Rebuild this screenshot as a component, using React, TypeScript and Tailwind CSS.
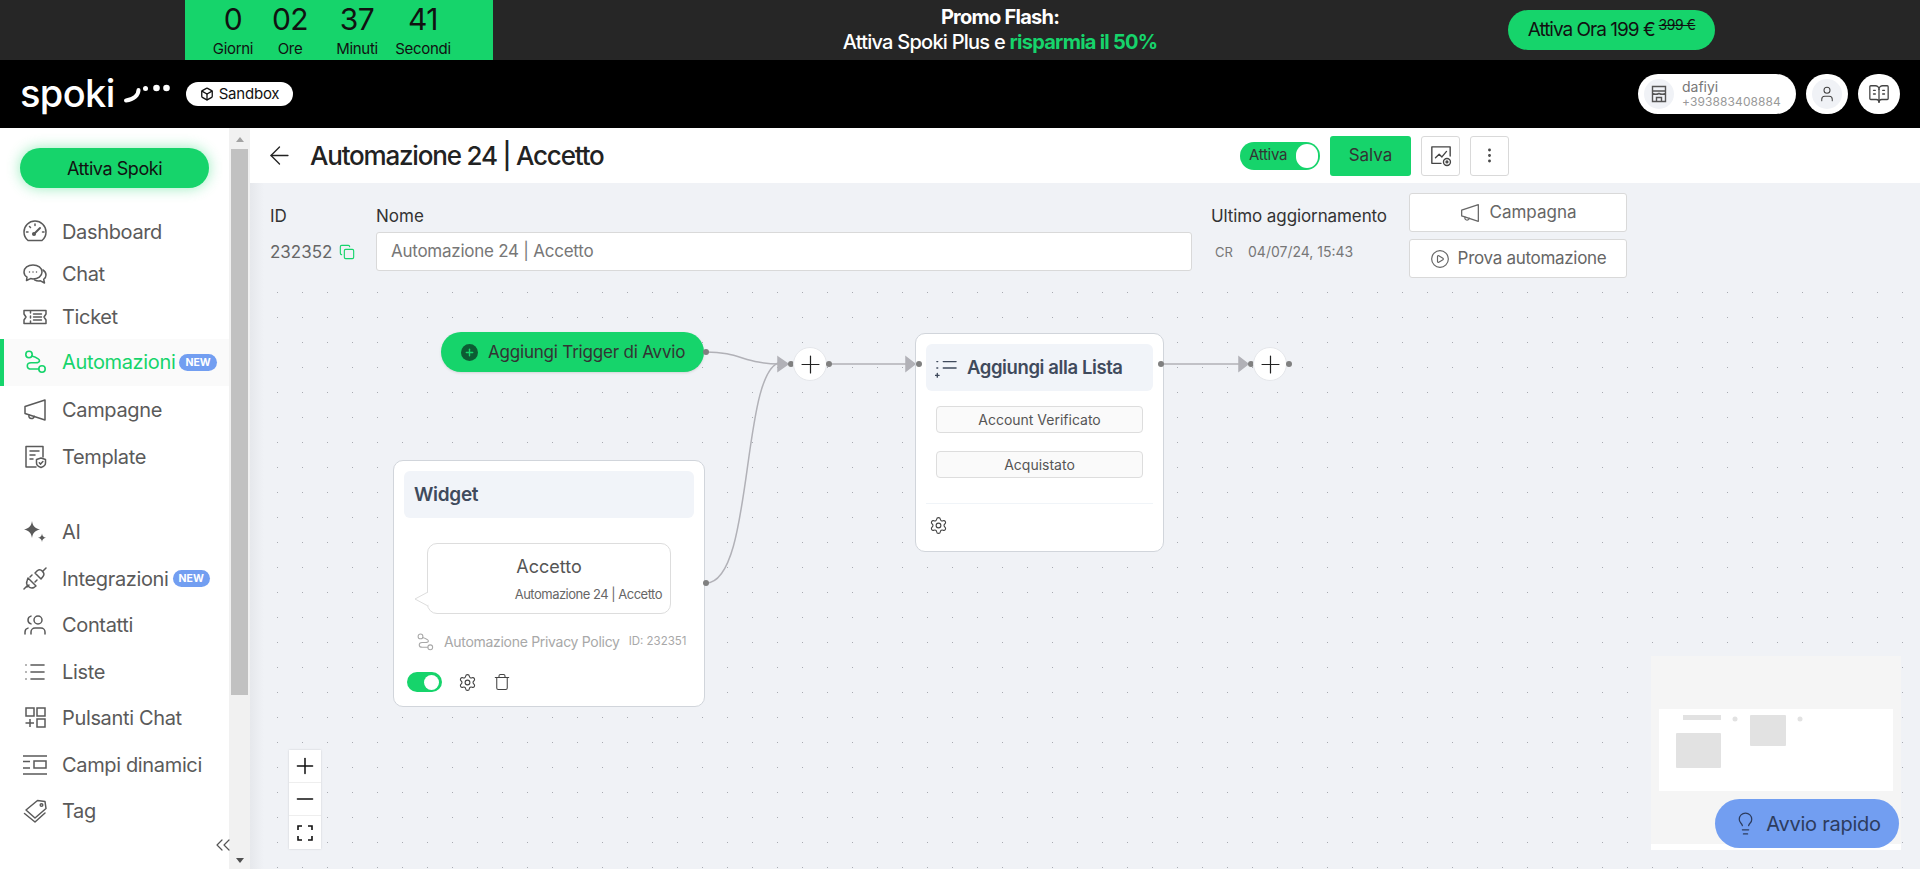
import React from "react";
import { ArrowLeft, Copy, CirclePlay, Settings, Trash, Plus, Minus, Lightbulb, User, BookOpenText, EllipsisVertical, List, Users, Box, ChevronsLeft } from "lucide-react";

const S = { fill: "none", stroke: "currentColor", strokeWidth: 1.5, strokeLinecap: "round", strokeLinejoin: "round" } as const;

const Flow = ({ size = 24, w = 1.6 }: { size?: number; w?: number }) => (
  <svg width={size} height={size} viewBox="0 0 24 24" {...S} strokeWidth={w}>
    <circle cx="6" cy="4.500" r="3.200" />
    <circle cx="19" cy="19" r="3.200" />
    <path d="M8.800 6c4 1.300 7.700 2.500 7.700 4.700 0 1.800-2 2-4 2H8c-2.500 0-3.700 1.500-3.700 3.200C4.300 18 6 19 8.500 19h7.300" />
  </svg>
);
const Dial = () => (
  <svg width="24" height="24" viewBox="0 0 24 24" {...S}>
    <path d="M5 20.500h14c2.500-2 4-5 4-8.500C23 6 18 1 12 1S1 6 1 12c0 3.500 1.500 6.500 4 8.500Z" />
    <path d="M11 14l6-6" strokeWidth={2} />
    <circle cx="11" cy="14" r="1.300" fill="currentColor" />
    <path d="M12 4v1.500M5 12H3.500M21 12h-1.500M6.500 6.500l1 1" />
  </svg>
);
const Horn = ({ size = 24 }: { size?: number }) => (
  <svg width={size} height={size} viewBox="0 0 24 24" {...S}>
    <path d="M22 2v20L2 15.500V8.500L22 2Z" />
    <path d="M6 17c-.5 2 .5 3.500 2.500 3.500 1.500 0 2.500-1 2.700-2.200" />
  </svg>
);
const Chat = () => (
  <svg width="24" height="24" viewBox="0 0 24 24" {...S}>
    <path d="M10 3c-5 0-9 2.800-9 7 0 2.300 1.200 4 3 5.200L3.500 18.500 7.500 16.600c.8.200 1.600.4 2.500.4 5 0 9-2.900 9-7s-4-7-9-7Z" />
    <path d="M20 8c2 1.300 3 3 3 5 0 2-1 3.400-2.300 4.400l.8 3.600-4-2.200c-2.200.4-4.300 0-6-1" />
    <path d="M6.500 10h.01M10 10h.01M13.500 10h.01" />
  </svg>
);
const Ticket = () => (
  <svg width="24" height="24" viewBox="0 0 24 24" {...S}>
    <path d="M1 5.500h22V9l-2 3 2 3v3.500H1V15l2-3-2-3V5.500Z" />
    <path d="M7.500 6v2M7.500 11v2M7.500 16v2M10.500 9h8M10.500 12h8M10.500 15h8" />
  </svg>
);
const Template = () => (
  <svg width="24" height="24" viewBox="0 0 24 24" {...S}>
    <path d="M13 22H3V1.500h17V12" />
    <path d="M7 6h9M7 10h5M7 14h3" />
    <path d="M18 13l4.500 1.500v3.500c0 2.500-2 3.700-4.500 4.500-2.500-.8-4.500-2-4.500-4.500v-3.500L18 13Z" />
    <path d="M16.300 17.800l1.300 1.300 2.300-2.500" />
  </svg>
);
const Spark = () => (
  <svg width="24" height="24" viewBox="0 0 24 24" fill="currentColor">
    <path d="M9 1c.8 5 2.500 7 8 8.500-5.500 1.500-7.200 3.500-8 8.500-.8-5-2.500-7-8-8.500C6.500 8 8.200 6 9 1Z" />
    <path d="M19 13.500c.4 2.600 1.200 3.500 4 4.300-2.800.7-3.600 1.600-4 4.200-.4-2.600-1.200-3.500-4-4.200 2.800-.8 3.600-1.700 4-4.300Z" />
  </svg>
);
const PlugIcon = () => (
  <svg width="24" height="24" viewBox="0 0 24 24" {...S}>
    <path d="M1 22l3.500-3.500M23 1l-3.500 3.500" />
    <path d="M5 11l8 8-2 1.500c-2 1-4 .5-5.500-1S3 16 4 14l1-3Z" />
    <path d="M4 20L6 18M9 8l-2 2M14 13l-2 2" />
    <path d="M12 6l2.500-2.500c1.500-1 3.500-.8 5 .7s1.700 3.500.7 5L18 12l-6-6Z" />
  </svg>
);
const Pulsanti = () => (
  <svg width="24" height="24" viewBox="0 0 24 24" {...S} strokeLinecap="butt" strokeLinejoin="miter">
    <rect x="3" y="2" width="8" height="8" />
    <rect x="14" y="2" width="8" height="8" />
    <rect x="14" y="13" width="8" height="8" />
    <path d="M7 13v8M2.500 17h8.500" />
  </svg>
);
const Campi = () => (
  <svg width="24" height="24" viewBox="0 0 24 24" {...S} strokeLinecap="butt" strokeLinejoin="miter">
    <path d="M0 3h24M0 21h24M0 8.500h7M0 15h7" />
    <rect x="11" y="8" width="12" height="7" />
  </svg>
);
const Tags = () => (
  <svg width="24" height="24" viewBox="0 0 24 24" {...S}>
    <path d="M14.500 1.500l7.500 1 1 7L12 19 3 11 14.500 1.500Z" />
    <circle cx="18.500" cy="6" r="1.300" />
    <path d="M1.500 14.500L12 23l10-9" />
  </svg>
);
const Shop = () => (
  <svg width="16" height="18" viewBox="0 0 16 18" fill="none" stroke="#555" strokeWidth="1.4">
    <path d="M1.500 1.500h13v15h-13zM1.500 6h13M1.500 8.500c2 1 4.500 1 6.500 0 2 1 4.500 1 6.500 0" />
    <path d="M5.500 16.500v-4h5v4" />
  </svg>
);
const ChartSet = () => (
  <svg width="22" height="22" viewBox="0 0 24 24" {...S} strokeWidth={1.5}>
    <path d="M22 12V2H2v18h10" />
    <path d="M6 14l4-4 3 3 5-6" />
    <circle cx="18.500" cy="18.500" r="3.800" />
    <circle cx="18.500" cy="18.500" r="1" />
  </svg>
);
const ListAdd = () => (
  <svg width="22" height="22" viewBox="0 0 24 24" {...S} strokeWidth={1.5}>
    <path d="M9 5h14M9 12h14M2 5h1M2 12h1M0.500 20h4M2.500 18v4" />
  </svg>
);
const Cfg = () => <Settings size={19} strokeWidth={1.4} className="text-[#444]" />;

const Item = ({ icon, label, isNew, active, h = "h-[46.5px]" }: { icon: React.ReactNode; label: string; isNew?: boolean; active?: boolean; h?: string }) => (
  <div className={`flex items-center ${h} ${active ? "border-l-4 border-[#16d46b] bg-[#fafafa] pl-[19px] text-[#16d46b]" : "pl-[23px] text-[#5a5a5a]"}`}>
    <span className="flex w-[24px] justify-center">{icon}</span>
    <span className="ml-[15px] text-[20px] leading-[26px] tracking-[-0.35px] whitespace-nowrap">{label}</span>
    {isNew && <span className="ml-[4px] rounded-full bg-[#729ef1] px-[6px] text-[10.5px] leading-[17px] font-bold text-white">NEW</span>}
  </div>
);

const Count = ({ n, l, w }: { n: string; l: string; w: string }) => (
  <div className={`flex ${w} flex-col items-center`}>
    <span className="text-[30px] leading-[38px] tracking-[-0.5px]">{n}</span>
    <span className="text-[15px] leading-[22px] tracking-[-0.3px]">{l}</span>
  </div>
);

const Handle = ({ cls }: { cls: string }) => <span className={`absolute h-[6px] w-[6px] rounded-full bg-[#808080] ${cls}`} />;

const PlusNode = ({ cls }: { cls: string }) => (
  <div className={`absolute flex h-[34px] w-[34px] items-center justify-center rounded-full border border-[#e5e7eb] bg-white ${cls}`}>
    <Plus size={29} strokeWidth={1} className="text-[#222]" />
  </div>
);

export default function App() {
  return (
    <div className="flex h-[869px] w-full flex-col overflow-hidden font-['Inter',sans-serif]">
      {/* promo */}
      <div className="relative flex h-[60px] shrink-0 bg-[#262626]">
        <div className="ml-[185px] flex h-full w-[308px] justify-start bg-[#16d46b] pl-[24px] text-[#111]">
          <Count n="0" l="Giorni" w="w-[48px]" />
          <Count n="02" l="Ore" w="w-[66px]" />
          <Count n="37" l="Minuti" w="w-[68px]" />
          <Count n="41" l="Secondi" w="w-[64px]" />
        </div>
        <div className="ml-[260px] flex w-[494px] flex-col items-center pt-[5px] text-[20px] leading-[25px] tracking-[-0.75px] text-white">
          <span className="font-bold">Promo Flash:</span>
          <span className="font-medium">Attiva Spoki Plus e <span className="font-bold text-[#16d46b]">risparmia il 50%</span></span>
        </div>
        <div className="ml-[261px] mt-[10px] flex h-[40px] w-[207px] items-center justify-center rounded-full bg-[#16d46b] text-[19px] tracking-[-1px] text-[#111]">
          Attiva Ora 199 €<span className="ml-1 -mt-[12px] text-[14px] tracking-[-0.5px] line-through">399 €</span>
        </div>
      </div>
      {/* header */}
      <div className="flex h-[68px] shrink-0 items-center bg-black pl-[20px] pr-[20px]">
        <span className="-mt-[3px] w-[102px] text-[38px] leading-none font-medium tracking-[-0.6px] text-white">spoki</span>
        <svg width="50" height="28" viewBox="0 0 50 28" className="text-white" fill="currentColor">
          <path d="M16.500 10C16.500 15 12 19.500 4 20.500" fill="none" stroke="currentColor" strokeWidth="4" strokeLinecap="round" />
          <circle cx="23.500" cy="8.500" r="2.500" /><circle cx="34.500" cy="8" r="3.300" /><circle cx="44.500" cy="8" r="3.300" />
        </svg>
        <div className="ml-[14px] flex h-[24px] w-[107px] items-center justify-center gap-[5px] rounded-full bg-white text-[15px] tracking-[-0.2px] text-[#111]">
          <Box size={14} strokeWidth={2.2} />
          Sandbox
        </div>
        <div className="ml-auto flex h-[40px] w-[158px] items-center rounded-full bg-white pl-[6px]">
          <span className="flex h-[30px] w-[30px] items-center justify-center rounded-full bg-[#f0f2f6]"><Shop /></span>
          <div className="ml-[8px] flex flex-col text-[#777]">
            <span className="text-[14px] leading-[15px]">dafiyi</span>
            <span className="text-[12px] leading-[15px] tracking-[0.1px] text-[#999]">+393883408884</span>
          </div>
        </div>
        <div className="ml-[10px] flex h-[40px] w-[42px] items-center justify-center rounded-full bg-white">
          <span className="flex h-[30px] w-[30px] items-center justify-center rounded-full bg-[#f0f2f6]"><User size={18} strokeWidth={1.4} className="text-[#444]" /></span>
        </div>
        <div className="ml-[10px] flex h-[40px] w-[42px] items-center justify-center rounded-full bg-white">
          <BookOpenText size={22} strokeWidth={1.4} className="text-[#444]" />
        </div>
      </div>
      {/* body */}
      <div className="flex min-h-0 flex-1">
        <aside className="relative flex w-[250px] shrink-0 bg-white">
          <div className="w-[229px] shrink-0">
            <div className="mx-[20px] mt-[20px] flex h-[40px] items-center justify-center rounded-full bg-[#16d46b] text-[18px] tracking-[-0.45px] text-[#111] shadow-[0_0_14px_rgba(22,212,107,0.45)]">Attiva Spoki</div>
            <div className="mt-[23px]">
              <Item icon={<Dial />} label="Dashboard" h="h-[42px]" />
              <Item icon={<Chat />} label="Chat" h="h-[42px]" />
              <Item icon={<Ticket />} label="Ticket" h="h-[44px]" />
              <Item icon={<Flow />} label="Automazioni" isNew active />
              <div className="h-[1px]" />
              <Item icon={<Horn />} label="Campagne" h="h-[46px]" />
              <Item icon={<Template />} label="Template" h="h-[48px]" />
              <div className="h-[28.5px]" />
              <Item icon={<Spark />} label="AI" />
              <Item icon={<PlugIcon />} label="Integrazioni" isNew />
              <Item icon={<Users size={24} strokeWidth={1.5} className="-scale-x-100" />} label="Contatti" />
              <Item icon={<List size={24} strokeWidth={1.6} />} label="Liste" />
              <Item icon={<Pulsanti />} label="Pulsanti Chat" />
              <Item icon={<Campi />} label="Campi dinamici" />
              <Item icon={<Tags />} label="Tag" />
            </div>
          </div>
          <div className="flex w-[21px] shrink-0 flex-col items-center bg-[#f1f1f1]">
            <span className="mt-[9px] h-0 w-0 border-x-[4px] border-b-[5px] border-x-transparent border-b-[#a3a3a3]" />
            <span className="mt-[7px] h-[546px] w-[17px] bg-[#c1c1c1]" />
            <span className="mt-auto mb-[6px] h-0 w-0 border-x-[4px] border-t-[5px] border-x-transparent border-t-[#505050]" />
          </div>
          <ChevronsLeft size={24} strokeWidth={1.2} className="absolute left-[211px] top-[705px] text-[#555]" />
        </aside>
        <main className="relative flex min-w-0 flex-1 flex-col bg-[#f0f2f6]">
          <div className="flex h-[55px] shrink-0 items-center bg-white pl-[15px]">
            <ArrowLeft size={29} strokeWidth={1.1} className="text-[#222]" />
            <h1 className="ml-[16px] w-[930px] text-[26px] font-medium tracking-[-1.2px] whitespace-nowrap text-[#222]">Automazione 24 | Accetto</h1>
            <div className="flex h-[28px] w-[80px] items-center rounded-full bg-[#16d46b] pl-[9px] text-[15px] tracking-[-0.3px] text-[#333]">
              Attiva
              <span className="ml-auto mr-[2px] h-[24px] w-[22px] rounded-full bg-white" />
            </div>
            <div className="ml-[10px] flex h-[40px] w-[81px] items-center justify-center rounded-[3px] bg-[#16d46b] text-[17px] text-[#333]">Salva</div>
            <div className="ml-[10px] flex h-[40px] w-[39px] items-center justify-center rounded-[3px] border border-[#d9d9d9] bg-white text-[#444]"><ChartSet /></div>
            <div className="ml-[10px] flex h-[40px] w-[39px] items-center justify-center rounded-[3px] border border-[#d9d9d9] bg-white text-[#444]"><EllipsisVertical size={19} strokeWidth={1.6} /></div>
          </div>
          <div className="flex h-[107px] shrink-0 text-[#333]">
            <div className="ml-[20px] w-[106px] pt-[22px]">
              <div className="text-[17px] leading-[22px]">ID</div>
              <div className="mt-[14px] flex items-center gap-[7px] text-[17px] leading-[22px] text-[#666]">232352<Copy size={16} strokeWidth={1.7} className="text-[#16d46b]" /></div>
            </div>
            <div className="w-[816px] pt-[22px]">
              <div className="text-[17px] leading-[22px]">Nome</div>
              <div className="mt-[5px] flex h-[39px] items-center rounded-[3px] border border-[#d9d9d9] bg-white px-[14px] pt-[1px] text-[17px] tracking-[-0.25px] text-[#777]">Automazione 24 | Accetto</div>
            </div>
            <div className="ml-[19px] w-[198px] pt-[22px]">
              <div className="text-[17px] leading-[22px] tracking-[-0.1px] whitespace-nowrap">Ultimo aggiornamento</div>
              <div className="mt-[16px] ml-[4px] flex items-center text-[14px] leading-[18px] text-[#777]"><span className="w-[33px] text-[13px]">CR</span>04/07/24, 15:43</div>
            </div>
            <div className="flex w-[218px] flex-col gap-[7px] pt-[10px]">
              <div className="flex h-[39px] items-center justify-center gap-[10px] rounded-[3px] border border-[#d9d9d9] bg-white pt-[1px] text-[17px] text-[#666]"><Horn size={20} />Campagna</div>
              <div className="flex h-[39px] items-center justify-center gap-[8px] rounded-[3px] border border-[#d9d9d9] bg-white pt-[1px] text-[17px] tracking-[-0.3px] text-[#666]"><CirclePlay size={20} strokeWidth={1.4} />Prova automazione</div>
            </div>
          </div>
          <div className="pointer-events-none absolute bottom-0 left-0 top-[55px] w-[14px] bg-gradient-to-r from-[#e6e8ec] to-[#f0f2f6]" />
          <div className="relative flex-1 bg-[radial-gradient(circle_at_2.5px_2.5px,#a9abb2_0.8px,transparent_1px)] bg-[length:25px_25px] bg-[position:25px_25px]">
            <div className="absolute bottom-0 left-0 top-0 w-[14px] bg-gradient-to-r from-[#e6e8ec] to-[#f0f2f6]" />
            <svg className="absolute left-0 top-0" width="1100" height="340" fill="none" stroke="#b1b1b7" strokeWidth="1.5">
              <path d="M456 62C490 62 495 74 530 74" />
              <path d="M456 293C505 293 490 74 532 72" />
              <path d="M579 74H658M911 74H990" />
              <path d="M528 67L538 74L528 81Z M656 67L665 74L656 81Z M989 67L998 74L989 81Z" fill="#b1b1b7" />
            </svg>

            <div className="absolute left-[191px] top-[42px] flex h-[40px] w-[263px] items-center rounded-full bg-[#16d46b] pl-[20px] text-[17px] tracking-[-0.2px] text-[#333] shadow-sm">
              <span className="flex h-[17px] w-[17px] items-center justify-center rounded-full bg-[#0c5c33]"><Plus size={11} strokeWidth={3} className="text-[#16d46b]" /></span>
              <span className="ml-[10px] pt-[1px]">Aggiungi Trigger di Avvio</span>
            </div>
            <Handle cls="left-[453px] top-[59px]" />
            <Handle cls="left-[538px] top-[71px]" />
            <PlusNode cls="left-[543px] top-[57px]" />
            <Handle cls="left-[576px] top-[71px]" />

            <div className="absolute left-[665px] top-[43px] flex h-[219px] w-[249px] flex-col rounded-[10px] border border-[#d1d5db] bg-white px-[10px] pt-[10px]">
              <div className="flex h-[47px] items-center rounded-[6px] bg-[#f1f4f9] pl-[9px] text-[#3f4a5c]">
                <ListAdd />
                <span className="ml-[10px] text-[18.5px] font-semibold tracking-[-0.4px] whitespace-nowrap">Aggiungi alla Lista</span>
              </div>
              <div className="mx-[10px] mt-[15px] flex h-[27px] items-center justify-center rounded-[4px] border border-[#ddd] bg-[#fafafa] text-[14px] text-[#555]">Account Verificato</div>
              <div className="mx-[10px] mt-[18px] flex h-[27px] items-center justify-center rounded-[4px] border border-[#ddd] bg-[#fafafa] text-[14px] text-[#555]">Acquistato</div>
              <div className="mt-[25px] border-t border-[#f0f4f8] pl-[3px] pt-[12px]"><Cfg /></div>
            </div>
            <Handle cls="left-[666px] top-[71px]" />
            <Handle cls="left-[908px] top-[71px]" />
            <Handle cls="left-[998px] top-[71px]" />
            <PlusNode cls="left-[1003px] top-[57px]" />
            <Handle cls="left-[1036px] top-[71px]" />

            <div className="absolute left-[143px] top-[170px] h-[247px] w-[312px] rounded-[10px] border border-[#d1d5db] bg-white px-[10px] pt-[10px]">
              <div className="flex h-[47px] items-center rounded-[6px] bg-[#f1f4f9] pl-[10px] pt-[1px] text-[19px] font-semibold tracking-[-0.3px] text-[#3f4a5c]">Widget</div>
              <div className="relative ml-[23px] mt-[25px] h-[71px] w-[244px] rounded-[10px] border border-[#ddd] bg-white pr-[8px] text-right">
                <div className="pl-[8px] pt-[10px] text-center text-[18px] leading-[26px] text-[#555]">Accetto</div>
                <div className="mt-[5px] text-[13px] leading-[18px] tracking-[-0.5px] whitespace-nowrap text-[#666]">Automazione 24 | Accetto</div>
                <svg className="absolute -left-[14px] top-[47px]" width="15" height="16" fill="#fff" stroke="#ddd"><path d="M14 1L1 8l13 7" /></svg>
              </div>
              <div className="mt-[17px] flex items-center pl-[12px] text-[#a8a8a8]">
                <Flow size={18} w={1.4} />
                <span className="ml-[10px] text-[14px] tracking-[-0.3px] whitespace-nowrap">Automazione Privacy Policy</span>
                <span className="ml-[9px] text-[11.5px] whitespace-nowrap">ID: 232351</span>
              </div>
              <div className="mt-[20px] flex items-center pl-[3px]">
                <span className="flex h-[20px] w-[35px] items-center justify-end rounded-full bg-[#16d46b] pr-[3px]"><span className="h-[15px] w-[15px] rounded-full bg-white" /></span>
                <span className="ml-[16px]"><Cfg /></span>
                <Trash size={18} strokeWidth={1.4} className="ml-[16px] text-[#444]" />
              </div>
            </div>
            <Handle cls="left-[453px] top-[290px]" />

            <div className="absolute left-[39px] top-[460px] flex w-[32px] flex-col bg-white text-[#111] shadow-[0_0_2px_rgba(0,0,0,0.15)]">
              <span className="flex h-[33px] items-center justify-center border-b border-[#eee]"><Plus size={26} strokeWidth={1.4} /></span>
              <span className="flex h-[33px] items-center justify-center border-b border-[#eee]"><Minus size={26} strokeWidth={1.4} /></span>
              <span className="flex h-[33px] items-center justify-center">
                <svg width="16" height="16" viewBox="0 0 16 16" fill="none" stroke="currentColor" strokeWidth="1.6"><path d="M1 5V1h4M11 1h4v4M15 11v4h-4M5 15H1v-4" /></svg>
              </span>
            </div>

            <svg className="absolute left-[1401px] top-[366px]" width="250" height="194">
              <rect width="250" height="188" fill="#f5f5f5" />
              <rect y="188" width="250" height="6" fill="#fff" />
              <rect x="8" y="53" width="234" height="82" fill="#fff" />
              <rect x="32" y="59" width="38" height="5" fill="#e2e2e2" />
              <rect x="25" y="77" width="45" height="35" rx="1" fill="#e2e2e2" />
              <circle cx="84" cy="63" r="2.500" fill="#e2e2e2" />
              <rect x="99" y="59" width="36" height="31" rx="1" fill="#e2e2e2" />
              <circle cx="149" cy="63" r="2.500" fill="#e2e2e2" />
            </svg>
            <div className="absolute left-[1465px] top-[509px] flex h-[49px] w-[184px] items-center justify-center gap-[8px] rounded-full bg-[#729ef1] text-[20px] tracking-[-0.25px] text-[#2d3c5e]">
              <Lightbulb size={25} strokeWidth={1.2} />Avvio rapido
            </div>
          </div>
        </main>
      </div>
    </div>
  );
}
